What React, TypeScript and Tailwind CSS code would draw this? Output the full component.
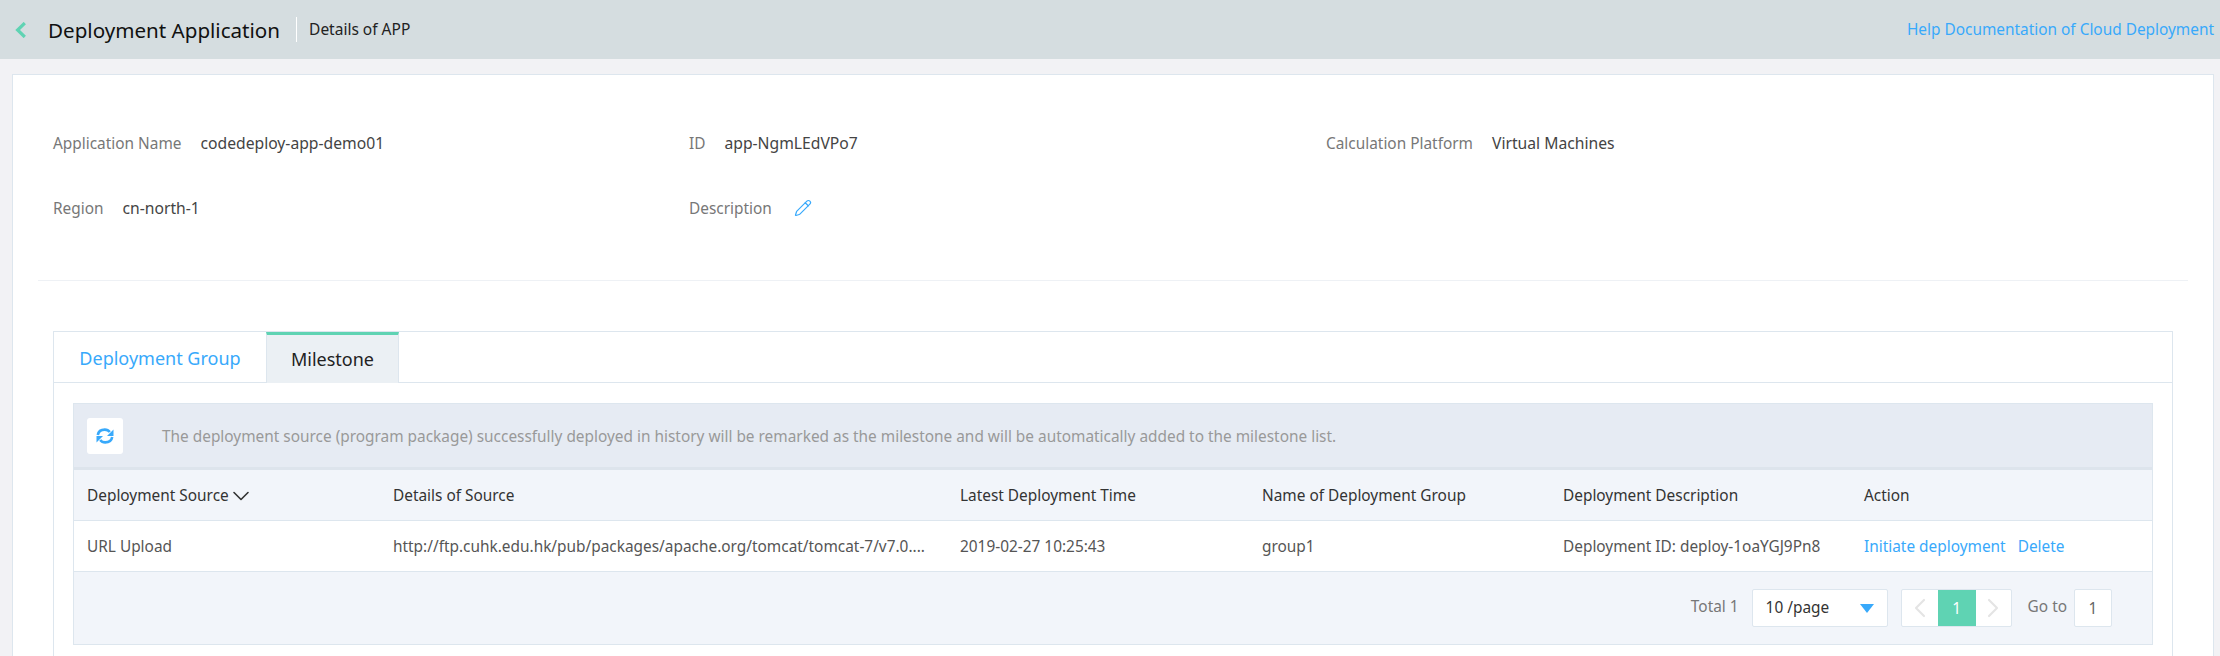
import { ChevronLeft, ChevronRight, ChevronDown, Pencil } from "lucide-react";

const font = { fontFamily: '"Noto Sans", "Open Sans", sans-serif' };

function Info({ label, children }: { label: string; children: React.ReactNode }) {
  return (
    <div className="flex items-center gap-[19px] h-5 leading-5">
      <span className="text-[15.4px] text-[#777]">{label}</span>
      <span className="text-[15.7px] text-[#444] -mt-0.5">{children}</span>
    </div>
  );
}

const cols = "grid grid-cols-[306px_567px_302px_301px_301px_1fr] items-center px-[13px] pt-[2px]";

function RefreshIcon() {
  return (
    <svg viewBox="0 0 18 16" className="h-[16px] w-[18px] text-[#38a9fb]" fill="none">
      <g>
        <path d="M1.8 7 C2.4 3.6 5.4 1.6 8.8 1.6 C11 1.6 12.6 2.4 13.8 4" stroke="currentColor" strokeWidth="2.6" />
        <polygon points="17.5,1.6 17.5,8 11,8" fill="currentColor" />
      </g>
      <g transform="rotate(180 9 8)">
        <path d="M1.8 7 C2.4 3.6 5.4 1.6 8.8 1.6 C11 1.6 12.6 2.4 13.8 4" stroke="currentColor" strokeWidth="2.6" />
        <polygon points="17.5,1.6 17.5,8 11,8" fill="currentColor" />
      </g>
    </svg>
  );
}

export default function App() {
  return (
    <div style={font} className="h-[656px] w-[2220px] overflow-hidden bg-[#f2f2f5]">
      <header className="flex h-[59px] items-center justify-between bg-[#d5dde0] pl-[15px] pr-[6px]">
        <div className="flex items-center">
          <svg viewBox="0 0 11 16" className="h-[16px] w-[11px] text-[#5fd3b3]" fill="none" stroke="currentColor" strokeWidth="3.2">
            <polyline points="9.8,1 2.6,8 9.8,15" />
          </svg>
          <h1 className="ml-[22px] text-[20.6px] leading-7 text-[#111]">Deployment Application</h1>
          <span className="ml-[16px] h-[25px] w-px bg-white" />
          <span className="ml-[12px] text-[15.5px] text-[#222]">Details of APP</span>
        </div>
        <a className="text-[15.4px] text-[#38a9fb]">Help Documentation of Cloud Deployment</a>
      </header>

      <main className="ml-[12px] mr-[6px] mt-[15px] border border-[#dde6ee] bg-white px-[25px]">
        <section className="grid grid-cols-[636px_637px_1fr] gap-y-[45px] border-b border-[#eef1f5] px-[15px] pt-[59px] pb-[61px]">
          <Info label="Application Name">codedeploy-app-demo01</Info>
          <Info label="ID">app-NgmLEdVPo7</Info>
          <Info label="Calculation Platform">Virtual Machines</Info>
          <Info label="Region">cn-north-1</Info>
          <Info label="Description">
            <Pencil className="ml-[3px] h-[18px] w-[18px] text-[#38a9fb]" strokeWidth={1.6} />
          </Info>
        </section>

        <section className="mt-[50px] ml-[15px] mr-[15px] border border-[#dde6ee]">
          <div className="flex h-[51px] border-b border-[#dde6ee] text-[18px]">
            <div className="flex w-[212px] items-center justify-center pt-[2px] text-[#38a9fb]">Deployment Group</div>
            <div className="-mb-px flex w-[133px] items-center justify-center border-x border-t-[3px] border-x-[#dde6ee] border-t-[#5fd3b3] bg-[#ebf0f4] text-[#222]">
              Milestone
            </div>
          </div>

          <div className="mx-[19px] mt-[20px] mb-[12px] border border-[#dde6ee] bg-[#f2f5fa]">
            <div className="flex h-[66px] items-center border-b-[3px] border-[#dde4ec] bg-[#e6ebf3] pl-[13px]">
              <button className="flex h-[36px] w-[36px] items-center justify-center rounded-[3px] bg-white">
                <RefreshIcon />
              </button>
              <span className="ml-[39px] pt-[2px] text-[15.4px] text-[#999]">
                The deployment source (program package) successfully deployed in history will be remarked as the milestone and will be automatically added to the milestone list.
              </span>
            </div>

            <div className={`${cols} h-[51px] border-b border-[#dde6ee] text-[15.4px] text-[#333]`}>
              <span className="flex items-center">
                Deployment Source
                <ChevronDown className="-my-1 -ml-[2px] h-7 w-7" strokeWidth={1.4} />
              </span>
              <span>Details of Source</span>
              <span>Latest Deployment Time</span>
              <span>Name of Deployment Group</span>
              <span>Deployment Description</span>
              <span>Action</span>
            </div>

            <div className={`${cols} h-[51px] border-b border-[#dde6ee] bg-white text-[15.4px] text-[#555]`}>
              <span>URL Upload</span>
              <span>http://ftp.cuhk.edu.hk/pub/packages/apache.org/tomcat/tomcat-7/v7.0....</span>
              <span>2019-02-27 10:25:43</span>
              <span>group1</span>
              <span>Deployment ID: deploy-1oaYGJ9Pn8</span>
              <span className="flex gap-3 text-[#38a9fb]">
                <a>Initiate deployment</a>
                <a>Delete</a>
              </span>
            </div>

            <div className="flex h-[72px] items-center justify-end pr-[40px] text-[15.4px] text-[#777]">
              <span className="-mt-[2px]">Total 1</span>
              <div className="ml-[13px] flex h-[38px] w-[136px] items-center justify-between rounded-[2px] border border-[#dde6ee] bg-white pl-[13px] pr-[13px] text-[#333]">
                <span>10 /page</span>
                <span className="h-0 w-0 border-x-[7px] border-t-[9px] border-x-transparent border-t-[#38a9fb]" />
              </div>
              <div className="ml-[13px] flex h-[38px] w-[111px] items-stretch rounded-[2px] border border-[#dde6ee] bg-white">
                <span className="flex w-[36px] items-center justify-center text-[#e4e4e4]">
                  <ChevronLeft className="h-8 w-8" strokeWidth={1.6} />
                </span>
                <span className="flex w-[38px] items-center justify-center bg-[#5fd3b3] pt-[2px] text-white">1</span>
                <span className="flex flex-1 items-center justify-center text-[#e4e4e4]">
                  <ChevronRight className="h-8 w-8" strokeWidth={1.6} />
                </span>
              </div>
              <span className="ml-[16px] -mt-[2px]">Go to</span>
              <div className="ml-[7px] flex h-[38px] w-[38px] items-center justify-center rounded-[2px] border border-[#dde6ee] bg-white pt-px text-[#666]">1</div>
            </div>
          </div>
        </section>
      </main>
    </div>
  );
}
